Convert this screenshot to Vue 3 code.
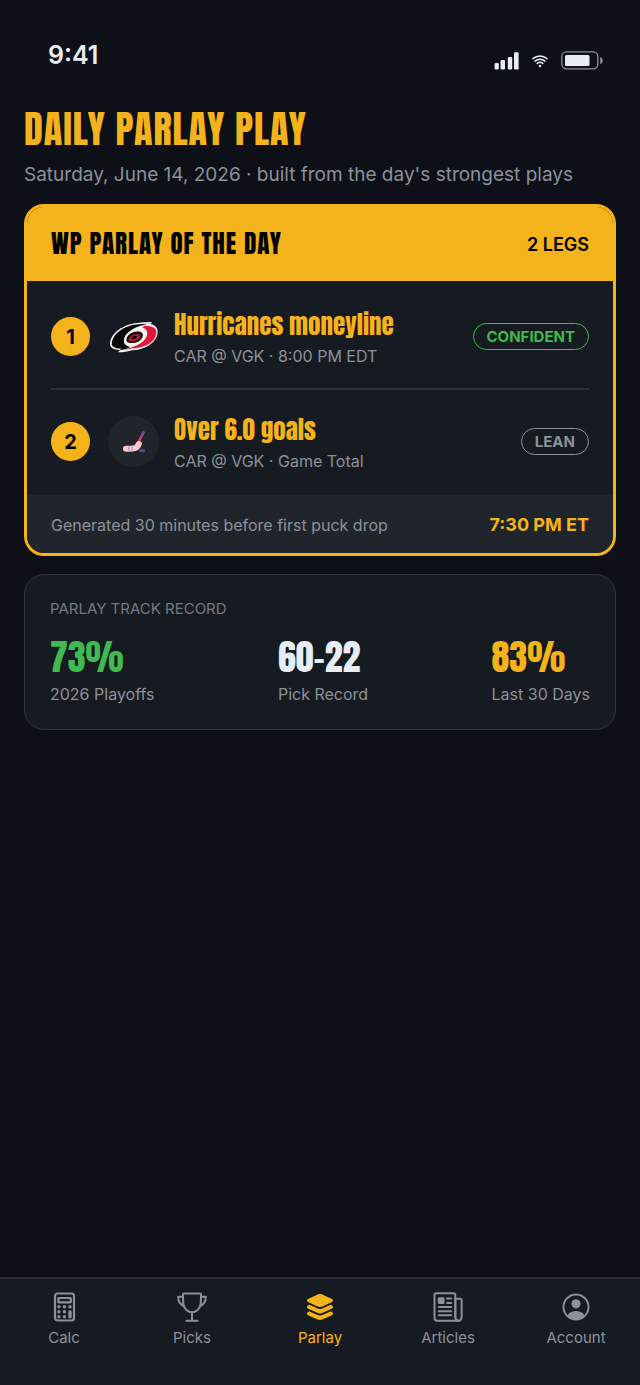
<script setup>
import { ref } from 'vue'

const legs = [
  { id: 1, title: 'Hurricanes moneyline', detail: 'CAR @ VGK · 8:00 PM EDT', confidence: 'Confident', icon: 'hurricanes' },
  { id: 2, title: 'Over 6.0 goals', detail: 'CAR @ VGK · Game Total', confidence: 'Lean', icon: 'stick' }
]

const stats = [
  { value: '73%', label: '2026 Playoffs', tone: 'green' },
  { value: '60-22', label: 'Pick Record', tone: 'light' },
  { value: '83%', label: 'Last 30 Days', tone: 'gold' }
]

const tabs = ['Calc', 'Picks', 'Parlay', 'Articles', 'Account']
const activeTab = ref('Parlay')
</script>

<template>
  <div class="screen">
    <div class="status-bar">
      <span class="time">9:41</span>
      <div class="status-icons">
        <svg class="signal" width="25" height="18" viewBox="0 0 25 18" fill="currentColor">
          <rect x="0.6" y="11" width="4.2" height="6.5" rx="1.2" />
          <rect x="6.6" y="8" width="4.4" height="9.5" rx="1.2" />
          <rect x="13.8" y="5" width="4.4" height="12.5" rx="1.2" />
          <rect x="20" y="0.3" width="4.6" height="17.2" rx="1.2" />
        </svg>
        <svg class="wifi" width="16" height="14" viewBox="0 0 16 14" fill="none" stroke="currentColor" stroke-width="1.5" stroke-linecap="round">
          <path d="M1 4.6a10.4 10.4 0 0 1 14 0M3.1 7.1a7.2 7.2 0 0 1 9.8 0M5.3 9.4a4 4 0 0 1 5.4 0" />
          <circle cx="8" cy="12" r="1.2" fill="currentColor" stroke="none" />
        </svg>
        <svg class="battery" width="43" height="19" viewBox="0 0 43 19">
          <rect x="0.8" y="0.8" width="36" height="17" rx="4.5" fill="none" stroke="#8b9098" stroke-width="1.3" />
          <rect x="4" y="4" width="24.5" height="11" rx="1.5" fill="currentColor" />
          <path d="M39.2 6v7c3.4-.8 3.4-6.2 0-7z" fill="#8b9098" />
        </svg>
      </div>
    </div>

    <main class="content">
      <header>
        <h1 class="display">DAILY PARLAY PLAY</h1>
        <p class="subtitle">Saturday, June 14, 2026 · built from the day's strongest plays</p>
      </header>

      <section class="parlay-card">
        <div class="parlay-head">
          <h2 class="display">WP PARLAY OF THE DAY</h2>
          <span class="leg-count">2 LEGS</span>
        </div>
        <ol class="legs">
          <li v-for="leg in legs" :key="leg.id" class="leg">
            <span class="leg-number">{{ leg.id }}</span>
            <span class="leg-icon" :class="leg.icon">
              <svg v-if="leg.icon === 'hurricanes'" width="50" height="34" viewBox="0 0 50 34">
                <path d="M1 24C1.500 13 14 4.500 28 3c5-.6 10-1 15-.9l-1.500 2c5 1.200 8 4.500 7 9.700C46.500 24.500 34 30 22 30.500c-4 1.200-8 2-13 1.800l2-2.300C5 29.800 1 28 1 24z" fill="#f2f2f2" />
                <path d="M2.800 23.500C3.500 14 15 6 27 4.600c4-.5 8-.9 12-.9C28 6 16.500 11 15 19.500c-.6 4 2 6.300 6 7.500-3 1.700-6 2.700-10 3l1-1.500c-5.500.1-9.400-1.400-9.200-5z" fill="#070707" />
                <path d="M36 5.700c8 0 12.300 2.900 11.300 8C45.500 23.500 33.500 28.500 22 28.400c-2.800.7-5.600 1.400-8 1.600C25 27 35.500 23.500 38 15.500c1-4-1-7-5-8.500z" fill="#df173c" />
                <path d="M15 20c1-6.500 8-10.500 14-10.700 5-.1 8 2.500 7.200 6.500-1.300 6.200-9 10-15.200 9.700-4.300-.2-6.700-2-6-5.500z" fill="#f2f2f2" />
                <path d="M17.500 19c1-4.300 6-7.400 11-7.400 4 0 6 2 5.200 4.800-1.300 4.300-6.200 6.600-11 6.600-3.600 0-5.800-1.300-5.200-4z" fill="#12090c" />
                <path d="M19.500 19.400c1-3.300 5-5.500 8.500-5.400 3 .1 4 1.500 3 3.400-1.500 2.500-4.700 4-8.200 3.900-2.300 0-3.700-.7-3.300-1.900z" fill="#b9132f" />
                <ellipse cx="25.200" cy="17.500" rx="2.800" ry="1.500" transform="rotate(-14 25.200 17.500)" fill="#12090c" />
              </svg>
              <svg v-else width="24" height="22" viewBox="0 0 24 22">
                <path d="M21 2 15.800 13" stroke="#e63862" stroke-width="2.600" stroke-linecap="round" />
                <path d="M21.500 1.300 19.800 5" stroke="#74479e" stroke-width="2.600" stroke-linecap="round" />
                <path d="M4 17.700c4 0 8 .3 10.300-1.200 1.500-1.100 2-2.300 2.500-3.400" fill="none" stroke="#ffc9cf" stroke-width="6" stroke-linecap="round" />
                <path d="M7 14.900v5.800M10 14.900v5.800" stroke="#b9a8bd" stroke-width="1.500" />
                <rect x="17" y="18.300" width="6" height="2.600" rx="1" fill="#60449e" />
              </svg>
            </span>
            <div class="leg-text">
              <h3 class="display">{{ leg.title }}</h3>
              <p>{{ leg.detail }}</p>
            </div>
            <span class="badge" :class="leg.confidence.toLowerCase()">{{ leg.confidence }}</span>
          </li>
        </ol>
        <div class="parlay-foot">
          <span>Generated 30 minutes before first puck drop</span>
          <strong>7:30 PM ET</strong>
        </div>
      </section>

      <section class="record-card">
        <h2>PARLAY TRACK RECORD</h2>
        <div class="stats">
          <div v-for="stat in stats" :key="stat.label" class="stat">
            <div class="stat-value display" :class="stat.tone">{{ stat.value }}</div>
            <div class="stat-label">{{ stat.label }}</div>
          </div>
        </div>
      </section>
    </main>

    <nav class="tab-bar">
      <a v-for="tab in tabs" :key="tab" href="#" class="tab" :class="{ active: tab === activeTab }" @click.prevent="activeTab = tab">
        <svg v-if="tab === 'Calc'" width="32" height="32" viewBox="0 0 32 32" fill="none" stroke="currentColor" stroke-width="2.200">
          <rect x="7" y="2.500" width="19" height="27" rx="2.500" />
          <rect x="10.400" y="7" width="12.400" height="4.300" rx="0.500" />
          <g fill="currentColor" stroke="none">
            <circle cx="10.900" cy="15.800" r="1.700" /><circle cx="16.400" cy="15.800" r="1.700" /><circle cx="22" cy="15.800" r="1.700" />
            <circle cx="10.900" cy="20.800" r="1.700" /><circle cx="16.400" cy="20.800" r="1.700" />
            <circle cx="10.900" cy="25.800" r="1.700" /><circle cx="16.400" cy="25.800" r="1.700" />
            <rect x="20.300" y="19.200" width="3.400" height="8.300" rx="1.600" />
          </g>
        </svg>
        <svg v-else-if="tab === 'Picks'" width="32" height="32" viewBox="0 0 512 512" fill="none" stroke="currentColor" stroke-width="32" stroke-linecap="round" stroke-linejoin="round">
          <path d="M168 476h176M256 476V340M124 40h264c8 0 12 5 12 12-3 50 3 110-8 172-14 68-76 116-136 116s-122-48-136-116c-11-62-5-122-8-172 0-7 4-12 12-12z" />
          <path d="M112 90H36c0 80 24 128 96 146M400 90h76c0 80-24 128-96 146" />
        </svg>
        <svg v-else-if="tab === 'Parlay'" width="32" height="32" viewBox="0 0 512 512" fill="currentColor">
          <path d="M256 256c-13.470 0-26.940-2.390-37.440-7.170l-148-67.490C63.790 178.260 48 169.250 48 152.240s15.790-26 22.580-29.120l149.280-68.070c20.570-9.400 51.610-9.400 72.190 0l149.370 68.070c6.790 3.090 22.580 12.100 22.580 29.120s-15.790 26-22.580 29.110l-148 67.480C282.940 253.610 269.470 256 256 256z" />
          <path id="layer" d="M441.360 226.810 426.270 220l-38.770 17.740-94 43c-10.500 4.800-24 7.190-37.440 7.190s-26.930-2.390-37.420-7.190l-94.070-43L85.790 220l-15.220 6.840C63.790 229.930 48 239 48 256s15.780 26.080 22.560 29.170l148 67.630C229 357.600 242.490 360 256 360s26.940-2.400 37.440-7.190l147.870-67.610c6.810-3.090 22.690-12.110 22.690-29.200s-15.770-26.070-22.640-29.190z" />
          <use href="#layer" y="105" />
        </svg>
        <svg v-else-if="tab === 'Articles'" width="32" height="32" viewBox="0 0 512 512" fill="none" stroke="currentColor" stroke-width="32" stroke-linecap="round" stroke-linejoin="round">
          <path d="M372 420V60a24 24 0 0 0-24-24H64a24 24 0 0 0-24 24v372a42 42 0 0 0 42 42h340" />
          <path d="M424 474a50 50 0 0 1-50-50V124h76a24 24 0 0 1 24 24v276a50 50 0 0 1-50 50z" />
          <path d="M240 120h68M240 190h68M108 256h200M108 322h200M108 388h200" />
          <rect x="108" y="116" width="76" height="76" rx="6" fill="currentColor" />
        </svg>
        <svg v-else width="32" height="32" viewBox="0 0 32 32" fill="currentColor">
          <circle cx="16" cy="16" r="12.500" fill="none" stroke="currentColor" stroke-width="1.900" />
          <circle cx="16" cy="12.800" r="4.600" />
          <path d="M7.500 24.200C9.500 21.300 12.500 20 16 20s6.500 1.300 8.500 4.200A12.300 12.300 0 0 1 16 28.300a12.300 12.300 0 0 1-8.500-4.100z" />
        </svg>
        <span>{{ tab }}</span>
      </a>
    </nav>
  </div>
</template>

<style>
body {
  margin: 0;
  background: #0d1017;
}
</style>

<style scoped>
.screen {
  display: flex;
  flex-direction: column;
  min-height: 100vh;
  background: #0d1017;
  color: #e8edf5;
  font-family: Inter, "Liberation Sans", sans-serif;
}

h1, h2, h3, p, ol {
  margin: 0;
  padding: 0;
}

/* condensed headline face */
.display {
  font-family: Anton, Impact, "Liberation Sans Narrow", sans-serif;
  font-weight: 400;
}

.status-bar {
  display: flex;
  align-items: center;
  justify-content: space-between;
  padding: 39px 36px 0 48px;
}

.time {
  font-size: 25px;
  line-height: 28px;
  font-weight: 600;
}

.status-icons {
  display: flex;
  align-items: center;
  gap: 13px;
  padding-top: 12px;
}

.content {
  flex: 1;
  padding: 31px 24px 24px;
}

h1 {
  color: #f5b31b;
  font-size: 38px;
  line-height: 56px;
  letter-spacing: 1px;
}

.subtitle {
  margin-top: 6px;
  color: #8b919b;
  font-size: 19px;
  line-height: 24px;
}

.parlay-card {
  margin-top: 17px;
  border: 3px solid #f5b31b;
  border-radius: 20px;
  background: #161b21;
  overflow: hidden;
}

.parlay-head {
  display: flex;
  align-items: center;
  justify-content: space-between;
  padding: 18px 24px;
  background: #f5b31b;
  color: #000;
}

.parlay-head h2 {
  font-size: 25px;
  line-height: 38px;
  letter-spacing: 1px;
}

.leg-count {
  font-size: 18px;
  font-weight: 600;
}

.legs {
  padding: 4px 24px 2px;
  list-style: none;
}

.leg {
  display: flex;
  align-items: center;
  height: 103px;
}

.leg + .leg {
  border-top: 2px solid #2b3037;
}

.leg-number {
  display: flex;
  align-items: center;
  justify-content: center;
  width: 39px;
  height: 39px;
  border-radius: 50%;
  background: #f5b31b;
  color: #000;
  font-size: 20px;
  font-weight: 700;
}

.leg-icon {
  display: flex;
  align-items: center;
  justify-content: center;
  width: 51px;
  height: 51px;
  margin: 0 15px 0 18px;
  border-radius: 50%;
}

.leg-icon.stick {
  background: #20252b;
}

.leg-text {
  flex: 1;
}

.leg-text h3 {
  color: #f5b31b;
  font-size: 25px;
  line-height: 36px;
}

.leg-text p {
  margin-top: 2px;
  color: #8b919b;
  font-size: 16px;
  line-height: 22px;
}

.badge {
  padding: 4px 13px;
  border: 1px solid #8b919b;
  border-radius: 14px;
  color: #8b919b;
  font-size: 15px;
  line-height: 17px;
  font-weight: 700;
  text-transform: uppercase;
}

.badge.confident {
  border-color: #3fb950;
  color: #3fb950;
}

.parlay-foot {
  display: flex;
  align-items: center;
  justify-content: space-between;
  padding: 19px 24px 17px;
  background: #20252b;
  color: #8b919b;
  font-size: 16px;
  line-height: 22px;
}

.parlay-foot strong {
  color: #f5b31b;
  font-size: 18px;
}

.record-card {
  margin-top: 18px;
  padding: 25px;
  border: 1px solid #30363d;
  border-radius: 20px;
  background: #161b21;
}

.record-card h2 {
  color: #737982;
  font-size: 15px;
  line-height: 18px;
  font-weight: 400;
}

.stats {
  display: flex;
  justify-content: space-between;
  margin-top: 12px;
}

.stat-value {
  font-size: 36px;
  line-height: 54px;
}

.stat-value.green {
  color: #3fb950;
}

.stat-value.light {
  color: #e8edf5;
}

.stat-value.gold {
  color: #f5b31b;
}

.stat-label {
  color: #8b919b;
  font-size: 16px;
  line-height: 20px;
}

.tab-bar {
  display: flex;
  height: 94px;
  padding-top: 12px;
  border-top: 2px solid #2b3037;
  background: #161b21;
}

.tab {
  display: flex;
  flex: 1;
  flex-direction: column;
  align-items: center;
  gap: 6px;
  color: #8b919b;
  font-size: 15px;
  line-height: 18px;
  text-decoration: none;
}

.tab.active {
  color: #f5b31b;
}
</style>
